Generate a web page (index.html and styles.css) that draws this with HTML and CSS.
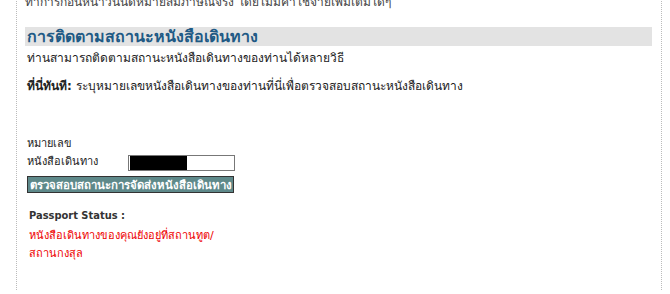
FILE: index.html
```html
<!DOCTYPE html>
<html lang="th">
  <head>
    <meta charset="UTF-8" />
    <meta name="viewport" content="width=device-width, initial-scale=1.0" />
    <title>การติดตามสถานะหนังสือเดินทาง</title>
    <link rel="stylesheet" href="styles.css">
  </head>
  <body>
    <div class="page">
      <div class="content">
        <p class="intro">ทำการก่อนหน้าวันนัดหมายสัมภาษณ์จริง โดยไม่มีค่าใช้จ่ายเพิ่มเติมใดๆ</p>

        <!-- Passport tracking -->
        <h2 class="section-title">การติดตามสถานะหนังสือเดินทาง</h2>
        <p class="text">ท่านสามารถติดตามสถานะหนังสือเดินทางของท่านได้หลายวิธี</p>
        <p class="text"><b>ที่นี่ทันที:</b> ระบุหมายเลขหนังสือเดินทางของท่านที่นี่เพื่อตรวจสอบสถานะหนังสือเดินทาง</p>

        <form class="track-form">
          <div class="field">
            <label class="field-label" for="passport">หมายเลข<br />หนังสือเดินทาง</label>
            <div class="input-box" id="passport"><span class="redacted"></span></div>
          </div>
          <button type="button" class="track-btn">ตรวจสอบสถานะการจัดส่งหนังสือเดินทาง</button>
        </form>

        <div class="status">
          <div class="status-title">Passport Status :</div>
          <div class="status-msg">หนังสือเดินทางของคุณยังอยู่ที่สถานทูต/<br />สถานกงสุล</div>
        </div>
      </div>
    </div>
  </body>
</html>
```

FILE: styles.css
```css
body {
  margin: 0;
  padding: 0;
  background-color: #fff;
  font-family: Tahoma, "DejaVu Sans", "Noto Sans", sans-serif;
  font-size: 12px;
  color: #222;
  overflow: hidden;
}

.page {
  margin-left: 16px;
  width: 646px;
  height: 294px;
  border-left: 1px dotted #bbb;
  border-right: 1px dotted #bbb;
  box-sizing: border-box;
  padding: 0 9px 0 8px;
}

.content {
  margin-top: -4px;
}

.intro {
  margin: 0;
  line-height: 13px;
  color: #444;
}

.section-title {
  margin: 18px 0 0;
  padding: 0 2px;
  background-color: #e3e3e3;
  color: #1f5a85;
  font-size: 16px;
  line-height: 19px;
  font-weight: bold;
}

.text {
  margin: 3px 0 10px;
  padding-left: 2px;
  line-height: 18px;
}

.track-form {
  margin-top: 40px;
  padding-left: 2px;
}

.field {
  display: flex;
  align-items: flex-end;
}

.field-label {
  width: 101px;
  line-height: 18px;
  font-size: 11px;
}

.input-box {
  width: 103px;
  height: 14px;
  border: 1px solid #777;
  padding: 0 1px;
}

.redacted {
  display: block;
  width: 57px;
  height: 14px;
  background: #000;
}

.track-btn {
  margin-top: 5px;
  width: 207px;
  height: 17px;
  padding: 0;
  border: 1px solid #333;
  background-color: #5e898a;
  color: #fff;
  font-family: inherit;
  font-size: 11.4px;
  font-weight: bold;
  line-height: 14px;
  white-space: nowrap;
}

.status {
  margin-top: 14px;
  padding-left: 4px;
}

.status-title {
  font-family: "DejaVu Sans Condensed", "DejaVu Sans", sans-serif;
  font-weight: bold;
  color: #333;
  font-size: 11px;
  line-height: 18px;
}

.status-msg {
  margin-top: 2px;
  color: #e00;
  font-size: 11px;
  line-height: 18px;
}
```
